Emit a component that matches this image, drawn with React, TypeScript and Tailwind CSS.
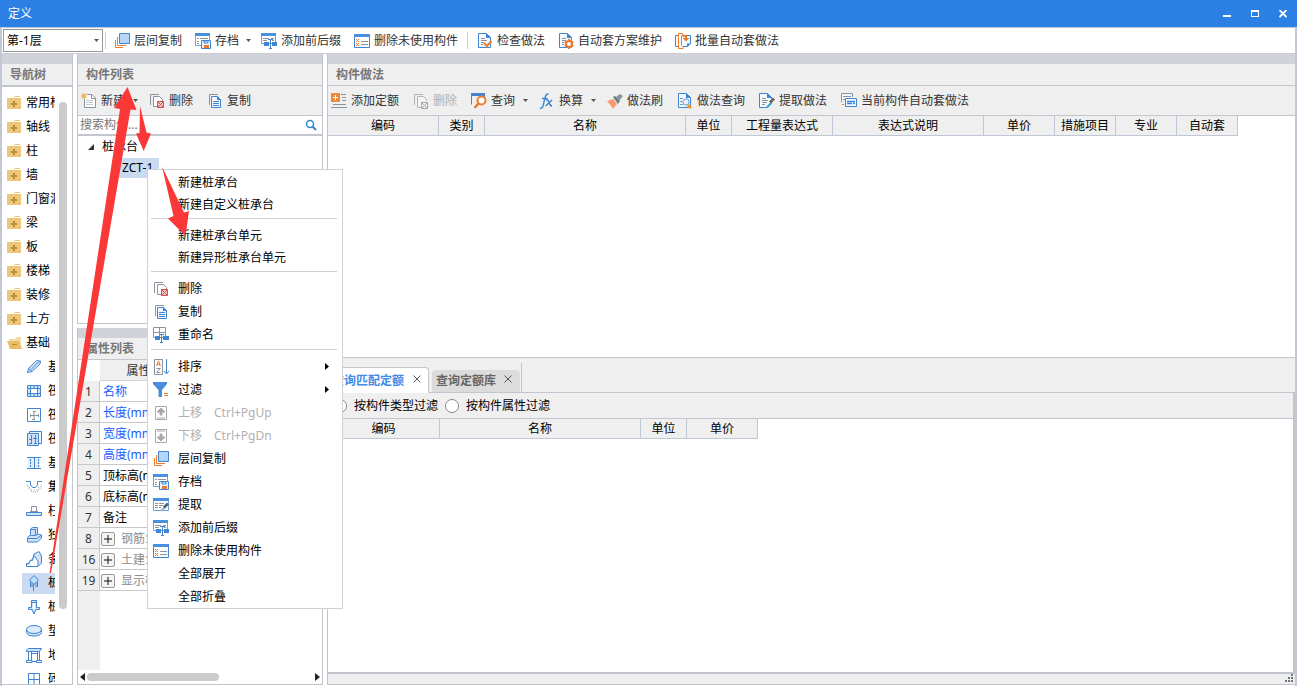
import type { ReactNode } from "react";

const BLUE = "#3f85d2";
const PALE = "#cfe2f8";
const ORANGE = "#ee7b2c";
const GRAY = "#8a949e";

const icons: Record<string, ReactNode> = {
  floorCopy: (
    <>
      <path d="M5.5.5h10v10h-10z" fill="#b5d5fb" stroke={BLUE} />
      <path d="M3.5 4v8.500H12M1.500 7v7.500H9" fill="none" stroke={ORANGE} />
    </>
  ),
  archive: (
    <>
      <path d="M.5.5h14v12H.5z" fill="#fff" stroke="#6fa3dd" />
      <path d="M0 0h15v3H0z" fill="#4a90e2" />
      <path d="M2 5.500h2M5 5.500h8M2 8.500h2M2 10.500h2" stroke={GRAY} />
      <path d="M6.500 7.500h9v8h-9z" fill="#e8f1fc" stroke={BLUE} />
      <path d="M9 8h4v2H9z" fill="#fff" stroke={BLUE} />
      <path d="M9 12h5v3H9z" fill={ORANGE} />
    </>
  ),
  prefix: (
    <>
      <path d="M.5.5h14v10H.5z" fill="#fff" stroke="#6fa3dd" />
      <path d="M0 0h15v3H0z" fill="#4a90e2" />
      <path d="M2 5.500h6M10 5.500h3M2 7.500h4M11 7.500h2" stroke={GRAY} />
      <path d="M3 9h5v4H3zM11 9h5v4h-5z" fill="#3f85d2" />
      <path d="M7 6.500h5M9.500 6.500v9M8 15.500h3" stroke={BLUE} />
    </>
  ),
  unused: (
    <>
      <path d="M.5 1.500h15v13H.5z" fill="#fff" stroke={BLUE} />
      <path d="M0 1h16v3H0z" fill="#4a90e2" />
      <path d="M2 6l3 3M5 6l-3 3M2 10l3 3M5 10l-3 3" stroke={ORANGE} />
      <path d="M7 8.500h7M7 11.500h7" stroke={GRAY} />
    </>
  ),
  check: (
    <>
      <path d="M1.500.5h8l4 4v10h-12z" fill="#f4f9ff" stroke={BLUE} />
      <path d="M9 0v5h5z" fill={BLUE} />
      <path d="M4 5.500h4M4 7.500h6M4 9.500h3M4 11.500h2" stroke={GRAY} />
      <path d="M7 10l3 3 4.500-5" fill="none" stroke={ORANGE} strokeWidth="2" />
    </>
  ),
  scheme: (
    <>
      <path d="M1.500.5h8l4 4v10h-12z" fill="#f4f9ff" stroke={BLUE} />
      <path d="M9 0v5h5z" fill={BLUE} />
      <path d="M4 5.500h4M4 7.500h4M4 9.500h2M4 11.500h2" stroke={GRAY} />
      <path d="M11 6v10M6.700 8.500l8.600 5M6.700 13.500l8.600-5" stroke={ORANGE} strokeWidth="2" />
      <circle cx="11" cy="11" r="3" fill="#fff" stroke={ORANGE} strokeWidth="2" />
    </>
  ),
  batch: (
    <>
      <path d="M3 2.500H.5v11H3" fill="none" stroke={BLUE} />
      <path d="M9 2.500h6.500v8l-3 3H8" fill="#f4f9ff" stroke={BLUE} />
      <path d="M12 14v-3.500h4z" fill={BLUE} />
      <path d="M8 2V.5H3.500v15H8V13M6.500 13V2.500H10" fill="none" stroke={ORANGE} />
      <path d="M8 2h4v3h2.500L11 8.500 7.500 5H10V4H8z" fill={ORANGE} />
    </>
  ),
  create: (
    <>
      <path d="M6 1.500h5l3.500 3.500v9.500h-11V6" fill="#fff" stroke={GRAY} />
      <path d="M10.500 1.500v4h4" fill="none" stroke={GRAY} />
      <path d="M5 7.500h7M5 9.500h7M5 11.500h7" stroke="#c3c9cf" />
      <path d="M.5.5l5 5M5.500.5l-5 5M3 0v6M0 3h6" stroke="#f0a648" />
    </>
  ),
  remove: (
    <>
      <path d="M1.500 12V1.500H10" fill="none" stroke={GRAY} />
      <path d="M8 13.500H4.500v-10h6l3 3V8" fill="#fff" stroke={GRAY} />
      <path d="M8.500 8.500h6v6h-6z" fill="#f6cfce" stroke="#d0504f" />
      <path d="M9 9l5 5M14 9l-5 5" stroke="#cf4a4a" />
    </>
  ),
  removeOff: (
    <>
      <path d="M1.500 12V1.500H10" fill="none" stroke="#b4b4b4" />
      <path d="M8 14.500H4.500v-11h6l3 3V8" fill="#f4f4f4" stroke="#b4b4b4" />
      <path d="M8.500 9.500h6v6h-6z" fill="#f4f4f4" stroke="#a8a8a8" />
      <path d="M9 10l5 5M14 10l-5 5" stroke="#a8a8a8" />
    </>
  ),
  copy: (
    <>
      <path d="M2.500 12V1.500H11" fill="none" stroke={GRAY} />
      <path d="M4.500 3.500h6l3 3v8h-9z" fill="#f4f9ff" stroke={BLUE} />
      <path d="M10 3v4h4z" fill={BLUE} />
      <path d="M6 8.500h6M6 10.500h6M6 12.500h6" stroke={BLUE} />
    </>
  ),
  addQuota: (
    <>
      <path d="M0 0h9v9H0z" fill="#ef8a3c" />
      <path d="M4.500 2v5M2 4.500h5" stroke="#fff" />
      <path d="M10 1.500h5M11 4.500h4M11 7.500h4M2 11.500h13M0 14.500h16" stroke={GRAY} />
    </>
  ),
  query: (
    <>
      <path d="M.5 11.500V1.500h13v3" fill="none" stroke={BLUE} />
      <path d="M0 0h14v3H0z" fill={BLUE} />
      <circle cx="10.500" cy="7.500" r="4" fill="#fff" stroke={ORANGE} strokeWidth="2" />
      <path d="M7.500 10.500L3.500 15" stroke={ORANGE} strokeWidth="2.500" />
    </>
  ),
  fx: (
    <>
      <path d="M1 15q2 1 3-2L6.500 3q.8-2.500 3-2M3 5.500h5.500" fill="none" stroke={BLUE} strokeWidth="1.400" />
      <path d="M7 7q2-1 3 2.500t3 3.500M13 7l-6.500 6" fill="none" stroke={BLUE} strokeWidth="1.400" />
    </>
  ),
  brush: (
    <>
      <path d="M0 8l6-2 4 5-4 5q-2-4-6-8z" fill="#fa9a6c" />
      <path d="M6 4l2-1 5 5-2 3z" fill="#6f7b86" />
      <path d="M9 4l4-3 3 2-4 5z" fill="#8a949e" />
    </>
  ),
  docSearch: (
    <>
      <path d="M1.500.5h8l4 4v10h-12z" fill="#f4f9ff" stroke={BLUE} />
      <path d="M9 0v5h5z" fill={BLUE} />
      <path d="M3 5.500h3M3 8.500h2M3 11.500h3" stroke={GRAY} />
      <circle cx="9" cy="9" r="3.200" fill="#eaf3fd" stroke="#5c98dc" />
      <path d="M11 12l3 3" stroke="#f09a2c" strokeWidth="3" />
    </>
  ),
  extractDoc: (
    <>
      <path d="M12.500 6V4.500l-4-4h-8v14H8" fill="#f4f9ff" stroke={BLUE} />
      <path d="M8 0v5h5z" fill={BLUE} />
      <path d="M3 5.500h4M3 7.500h6M3 9.500h5M3 11.500h3" stroke={GRAY} />
      <path d="M8 14.500l4.500-5" stroke="#38a8c8" strokeWidth="2" />
      <path d="M11 9.500l4-4" stroke="#6b6460" strokeWidth="3" />
    </>
  ),
  autoCurrent: (
    <>
      <path d="M.5 9V.5h11V4" fill="#f5f5f5" stroke={GRAY} />
      <path d="M2 3.500h8M2 6.500h2" stroke={GRAY} />
      <path d="M4.500 5.500h11v8h-11z" fill="#f4f9ff" stroke={BLUE} />
      <path d="M6 8.500h8M6 10.500h5M12 10.500h2" stroke={BLUE} strokeWidth="1.500" />
      <path d="M1 11.500h2" stroke={ORANGE} />
    </>
  ),
  rename: (
    <>
      <path d="M.5.500h12v10H.5zM6.500.5v10M.5 5.500h12" fill="#fff" stroke={GRAY} />
      <path d="M2 9h5v4H2zM10 9h6v4h-6z" fill="#3f85d2" />
      <path d="M6 7.500h5M8.500 7.500v8M7 15.500h3" stroke={BLUE} />
    </>
  ),
  sort: (
    <>
      <path d="M1.500.5h8v15h-8z" fill="#fff" stroke={GRAY} />
      <path d="M3.500 7l2-5 2 5M4 5.500h3" fill="none" stroke={ORANGE} />
      <path d="M3.500 9.500h4l-4 4h4" fill="none" stroke={GRAY} />
      <path d="M13.500 0v14M11 12l2.500 3 2.500-3" fill="none" stroke={BLUE} />
    </>
  ),
  filter: (
    <>
      <path d="M0 0h14v2L9 8v7H5.500V8L0 2z" fill="#4a8ddc" />
      <path d="M11 11.500h4M11 13.500h4" stroke={ORANGE} />
    </>
  ),
  up: (
    <>
      <path d="M2.500 1.500h11v13h-11z" fill="#fff" stroke="#a9a9a9" />
      <path d="M8 3L4 7h3v3h2V7h3zM4 13h8" fill="#a9a9a9" stroke="#a9a9a9" />
    </>
  ),
  down: (
    <>
      <path d="M2.500 1.500h11v13h-11z" fill="#fff" stroke="#a9a9a9" />
      <path d="M8 13L4 9h3V6h2v3h3zM4 3h8" fill="#a9a9a9" stroke="#a9a9a9" />
    </>
  ),
  extract: (
    <>
      <path d="M.5 1.500h15v12H.5z" fill="#fff" stroke="#6fa3dd" />
      <path d="M0 1h16v3H0z" fill="#4a90e2" />
      <path d="M2 6.500h3M6 6.500h5M2 8.500h3M6 8.500h4M2 10.500h3M6 10.500h2" stroke={GRAY} />
      <path d="M8 14l4-4" stroke="#9fb3c0" strokeWidth="2" />
      <path d="M11 10.500l4-4" stroke="#56636d" strokeWidth="3" />
    </>
  ),
  pencil: (
    <>
      <path d="M1.500 13.500l1-4 8-8 4 .5-.5 3-8 7.500z" fill={PALE} stroke={BLUE} />
      <path d="M2.500 9.500l3.500 3M5 10.500l8-8" fill="none" stroke={BLUE} />
    </>
  ),
  frame: (
    <>
      <path d="M1.500 2.500h13v11h-13z" fill={PALE} stroke={BLUE} />
      <path d="M4.500 5.500h7v5h-7zM4.500 2v12M11.500 2v12M8 2v3M8 11v3M1 5.500h3M12 5.500h3M1 10.500h3M12 10.500h3" fill="#fff" stroke={BLUE} />
    </>
  ),
  crossFrame: (
    <>
      <path d="M1.500 1.500h13v13h-13z" fill="#fff" stroke={BLUE} />
      <path d="M8 4v9M4 8.500h8M7 4.500h3M4.500 7v3M12.500 7v3M6 12.500h3" stroke={GRAY} />
    </>
  ),
  stackFrame: (
    <>
      <path d="M3.500 3V.5h12v12H13" fill="#eef5fd" stroke={BLUE} />
      <path d="M1.500 2.500h11v12h-11z" fill={PALE} stroke={BLUE} />
      <path d="M5.500 4v8M9.500 4v8M3 8.500h3M7 7.500h4M3 12.500h3M8 12.500h3" stroke={BLUE} />
    </>
  ),
  strip: (
    <>
      <path d="M2 3h12v10H2z" fill="#e3eefb" />
      <path d="M1 2.500h14M1 13.500h14M8.500 3v10" stroke={BLUE} />
      <path d="M4.500 4v9M12.500 4v9" stroke={BLUE} strokeDasharray="2 1" />
    </>
  ),
  pit: (
    <>
      <path d="M0 2.500h4.500V6l2 2.500h3l2-2.500V2.500H16" fill="none" stroke={BLUE} />
      <path d="M1 5.500l2 4 3 3.500h5l3-3.500 2-4" fill="none" stroke={GRAY} strokeDasharray="1 1" />
      <path d="M3 8l3 3h5l2-3" fill="none" stroke={GRAY} strokeDasharray="1 2" />
    </>
  ),
  cap: (
    <>
      <path d="M5.500 8V3.500h5V8M4 8.500h8" fill="#fff" stroke={GRAY} />
      <path d="M.5 9.500h15v3H.5z" fill={PALE} stroke={BLUE} />
    </>
  ),
  isolated: (
    <>
      <path d="M1.500 10.500l3-3V2l2-1.500h5V7l4 1v3l-4 4h-10z" fill={PALE} stroke={BLUE} />
      <path d="M1 11.500h10l4-3M4.500 8.500h5V2.500h-5M9.500 8.500l2-1" fill="none" stroke={BLUE} />
    </>
  ),
  multi: (
    <>
      <path d="M.5 15.500v-3h2l2-3.500h2L8 3l5-2.500L15.500 5v7L12 15.500z" fill={PALE} stroke={BLUE} />
      <path d="M.5 15.500V13h2l2-3.500h2L8 4.500l4 5.500v5.500z" fill="#fff" stroke={BLUE} />
    </>
  ),
  pileCap: (
    <>
      <path d="M8 .5L12.500 5 8 9.500 3.500 5z" fill="#bcdcfa" stroke={BLUE} />
      <path d="M4.500 7v5M7.500 9v7M11.500 7v5M6 8v4M10 8v4" stroke={BLUE} />
    </>
  ),
  pile: (
    <>
      <path d="M5.500 1.500h5v7h3v2H10L8 15l-2-4.500H2.500v-2h3z" fill={PALE} stroke={BLUE} />
      <path d="M7 3h2v7H7z" fill="#fff" />
      <path d="M5 3.500h6" stroke={BLUE} />
    </>
  ),
  cushion: (
    <>
      <path d="M.5 6.500v3q1 3.500 7.500 3.500t7.500-3.500v-3" fill={PALE} stroke={BLUE} />
      <ellipse cx="8" cy="6.500" rx="7.500" ry="4" fill="#dcebfb" stroke={BLUE} />
    </>
  ),
  beam: (
    <>
      <path d="M.5 4.500V3l2-1.500h13l-2 3z" fill={PALE} stroke={BLUE} />
      <path d="M2.500 5v8M5.500 5v8M11.500 5v8M13.500 5v8M5.500 6.500h6M.5 13.500h5.500v2H.5zM10.500 13.500h5v2h-5zM6 14.500h5" fill="none" stroke={BLUE} />
    </>
  ),
  brick: (
    <>
      <path d="M2.500 2.500h11v12h-11z" fill="#fff" stroke={BLUE} />
      <path d="M8 3v11M3 8.500h10" stroke={BLUE} />
    </>
  ),
};

function Icon({ name }: { name: string }) {
  return (
    <svg className="h-4 w-4 shrink-0" viewBox="0 0 16 16" aria-hidden="true">
      {icons[name]}
    </svg>
  );
}

function Caret() {
  return (
    <svg className="h-[3px] w-[5px]" viewBox="0 0 5 3" aria-hidden="true">
      <path d="M0 0h5L2.500 3z" fill="#555" />
    </svg>
  );
}

function Folder({ open = false }: { open?: boolean }) {
  return (
    <svg className="h-4 w-4 shrink-0" viewBox="0 0 16 16" aria-hidden="true">
      {open ? (
        <>
          <path d="M2 4h6l1-2h5v11H2z" fill="#f5dca6" />
          <path d="M0 6h12l3 8H3z" fill="#e8bd66" />
          <path d="M5 9.500h5" stroke="#b8892f" />
        </>
      ) : (
        <>
          <path d="M0 3h14v11H0z" fill="#eec77c" />
          <path d="M7 1.500h6" stroke="#eec77c" />
          <path d="M7 6v6M4 9h6" stroke="#b8892f" strokeWidth="2" />
          <path d="M6.500 9h1" stroke="#eec77c" />
        </>
      )}
    </svg>
  );
}

const mainTools = [
  { icon: "floorCopy", label: "层间复制" },
  { icon: "archive", label: "存档", menu: true },
  { icon: "prefix", label: "添加前后缀" },
  { icon: "unused", label: "删除未使用构件", divider: true },
  { icon: "check", label: "检查做法" },
  { icon: "scheme", label: "自动套方案维护" },
  { icon: "batch", label: "批量自动套做法" },
];

interface Tool {
  icon: string;
  label: string;
  menu?: boolean;
  disabled?: boolean;
}

const componentTools: Tool[] = [
  { icon: "create", label: "新建", menu: true },
  { icon: "remove", label: "删除" },
  { icon: "copy", label: "复制" },
];

const methodTools: Tool[] = [
  { icon: "addQuota", label: "添加定额" },
  { icon: "removeOff", label: "删除", disabled: true },
  { icon: "query", label: "查询", menu: true },
  { icon: "fx", label: "换算", menu: true },
  { icon: "brush", label: "做法刷" },
  { icon: "docSearch", label: "做法查询" },
  { icon: "extractDoc", label: "提取做法" },
  { icon: "autoCurrent", label: "当前构件自动套做法" },
];

const navGroups = ["常用构件类型", "轴线", "柱", "墙", "门窗洞", "梁", "板", "楼梯", "装修", "土方"];

const foundationItems = [
  { icon: "pencil", label: "基础梁" },
  { icon: "frame", label: "筏板基础" },
  { icon: "crossFrame", label: "筏板主筋" },
  { icon: "stackFrame", label: "筏板负筋" },
  { icon: "strip", label: "基础板带" },
  { icon: "pit", label: "集水坑" },
  { icon: "cap", label: "柱墩" },
  { icon: "isolated", label: "独立基础" },
  { icon: "multi", label: "条形基础" },
  { icon: "pileCap", label: "桩承台", selected: true },
  { icon: "pile", label: "桩" },
  { icon: "cushion", label: "垫层" },
  { icon: "beam", label: "地沟" },
  { icon: "brick", label: "砖胎膜" },
];

const properties = [
  { no: 1, label: "名称", tone: "text-[#1a5cff]" },
  { no: 2, label: "长度(mm)", tone: "text-[#1a5cff]" },
  { no: 3, label: "宽度(mm)", tone: "text-[#1a5cff]" },
  { no: 4, label: "高度(mm)", tone: "text-[#1a5cff]" },
  { no: 5, label: "顶标高(m)", tone: "text-black" },
  { no: 6, label: "底标高(m)", tone: "text-black" },
  { no: 7, label: "备注", tone: "text-black" },
  { no: 8, label: "钢筋业务属性", tone: "text-[#8c8c8c]", group: true },
  { no: 16, label: "土建业务属性", tone: "text-[#8c8c8c]", group: true },
  { no: 19, label: "显示样式", tone: "text-[#8c8c8c]", group: true },
];

const methodColumns = [
  { label: "编码", width: 111 },
  { label: "类别", width: 46 },
  { label: "名称", width: 201 },
  { label: "单位", width: 46 },
  { label: "工程量表达式", width: 101 },
  { label: "表达式说明", width: 151 },
  { label: "单价", width: 71 },
  { label: "措施项目", width: 61 },
  { label: "专业", width: 61 },
  { label: "自动套", width: 61 },
];

const quotaColumns = [
  { label: "编码", width: 112 },
  { label: "名称", width: 201 },
  { label: "单位", width: 46 },
  { label: "单价", width: 71 },
];

const menuSections: { label: string; icon?: string; shortcut?: string; submenu?: boolean; disabled?: boolean }[][] = [
  [{ label: "新建桩承台" }, { label: "新建自定义桩承台" }],
  [{ label: "新建桩承台单元" }, { label: "新建异形桩承台单元" }],
  [
    { label: "删除", icon: "remove" },
    { label: "复制", icon: "copy" },
    { label: "重命名", icon: "rename" },
  ],
  [
    { label: "排序", icon: "sort", submenu: true },
    { label: "过滤", icon: "filter", submenu: true },
    { label: "上移", icon: "up", shortcut: "Ctrl+PgUp", disabled: true },
    { label: "下移", icon: "down", shortcut: "Ctrl+PgDn", disabled: true },
    { label: "层间复制", icon: "floorCopy" },
    { label: "存档", icon: "archive" },
    { label: "提取", icon: "extract" },
    { label: "添加前后缀", icon: "prefix" },
    { label: "删除未使用构件", icon: "unused" },
    { label: "全部展开" },
    { label: "全部折叠" },
  ],
];

function PanelTitle({ children }: { children: ReactNode }) {
  return (
    <header className="shrink-0 border-t-10 border-[#d2d3da] bg-[#efefef]">
      <h2 className="h-[22px] border-b border-[#c3c6cc] px-2 leading-[21px] font-bold text-[#777]">{children}</h2>
    </header>
  );
}

function PanelToolbar({ tools }: { tools: Tool[] }) {
  return (
    <div className="flex h-[30px] shrink-0 items-center gap-2 overflow-hidden border-b border-[#c3c6cc] bg-[#efefef]">
      {tools.map((tool) => (
        <button
          key={tool.label}
          type="button"
          disabled={tool.disabled}
          className={`flex h-6 shrink-0 items-center gap-1 pl-[3px] ${tool.menu ? "" : "pr-[3px]"} ${tool.disabled ? "text-[#b0b0b0]" : "text-[#333]"}`}
        >
          <Icon name={tool.icon} />
          {tool.label}
          {tool.menu ? (
            <span className="flex w-[9px] justify-end">
              <Caret />
            </span>
          ) : null}
        </button>
      ))}
    </div>
  );
}

function HeaderTable({ columns }: { columns: { label: string; width: number }[] }) {
  return (
    <table className="table-fixed border-separate border-spacing-0 self-start">
      <thead>
        <tr>
          {columns.map((column) => (
            <th
              key={column.label}
              scope="col"
              style={{ width: column.width }}
              className="h-5 border-r border-b border-[#c0c8d8] bg-[#efefef] p-0 font-normal"
            >
              {column.label}
            </th>
          ))}
        </tr>
      </thead>
    </table>
  );
}

function NavPanel() {
  return (
    <nav className="flex w-[71px] shrink-0 flex-col border-r border-b border-[#c0c4cc] bg-white">
      <PanelTitle>导航树</PanelTitle>
      <div className="flex min-h-0 flex-1 border-t border-[#c3c6cc] pt-1">
        <ul className="w-[53px] overflow-hidden">
          {navGroups.map((label) => (
            <li key={label} className="flex h-6 items-center gap-[3px] pl-[5px] whitespace-nowrap">
              <Folder />
              <span>{label}</span>
            </li>
          ))}
          <li className="flex h-6 items-center gap-[3px] pl-[5px] whitespace-nowrap">
            <Folder open />
            <span>基础</span>
          </li>
          {foundationItems.map((item) => (
            <li key={item.icon} className="flex h-6 items-center pl-5">
              <span
                className={`flex h-[21px] w-full items-center gap-[6px] pl-1 whitespace-nowrap ${item.selected ? "bg-[#c9daf1]" : ""}`}
              >
                <Icon name={item.icon} />
                {item.label}
              </span>
            </li>
          ))}
        </ul>
        <div className="mt-[11px] ml-1 h-[507px] w-2 rounded-full bg-[#cbcbcb]" />
      </div>
    </nav>
  );
}

function ComponentPanel() {
  return (
    <div className="flex w-[246px] shrink-0 flex-col">
      <section className="flex h-[270px] shrink-0 flex-col border-x border-b border-[#c0c4cc] bg-white">
        <PanelTitle>构件列表</PanelTitle>
        <PanelToolbar tools={componentTools} />
        <div className="flex h-5 shrink-0 items-center border-b-2 border-[#c3c6cc] pr-[5px]">
          <input
            type="text"
            aria-label="搜索构件"
            placeholder="搜索构件..."
            className="min-w-0 flex-1 px-[2px] outline-none placeholder:text-[#777]"
          />
          <svg className="h-3 w-3" viewBox="0 0 12 12" aria-hidden="true">
            <circle cx="5" cy="5" r="3.500" fill="none" stroke="#2e8bc9" strokeWidth="1.500" />
            <path d="M7.500 7.500L11 11" stroke="#2e8bc9" strokeWidth="2" />
          </svg>
        </div>
        <ul>
          <li>
            <div className="flex h-[22px] items-center gap-[7px] pl-[10px]">
              <svg className="h-[6px] w-[7px]" viewBox="0 0 7 6" aria-hidden="true">
                <path d="M6 0v6H0z" fill="#333" />
              </svg>
              桩承台
            </div>
            <ul>
              <li className="ml-[41px] h-5 w-10 bg-[#c9daf1] pl-[3px] leading-5">ZCT-1</li>
            </ul>
          </li>
        </ul>
      </section>

      <section className="mt-1 flex min-h-0 flex-1 flex-col border-x border-b border-[#c0c4cc] bg-white">
        <PanelTitle>属性列表</PanelTitle>
        <div className="flex min-h-0 flex-1 flex-col overflow-hidden bg-[linear-gradient(to_right,#efefef_22px,#fff_22px)]">
          <table className="w-full table-fixed border-separate border-spacing-0">
            <colgroup>
              <col className="w-[22px]" />
              <col className="w-[101px]" />
              <col />
            </colgroup>
            <thead>
              <tr>
                <td className="h-[21px] bg-white p-0" />
                <th scope="col" className="border-b border-[#d4d4d4] bg-[#efefef] p-0 pt-px font-normal text-[#333]">属性名称</th>
                <th scope="col" className="border-b border-[#d4d4d4] bg-[#efefef] p-0 pt-px font-normal text-[#333]">属性值</th>
              </tr>
            </thead>
            <tbody>
              {properties.map((row) => (
                <tr key={row.no}>
                  <th scope="row" className="h-[21px] border-r border-b border-[#c8c8c8] bg-[#efefef] p-0 pt-px font-normal text-[#333]">
                    {row.no}
                  </th>
                  <td className={`border-r border-b border-[#c8c8c8] p-0 pt-px ${row.tone}`}>
                    <div className={`flex items-center ${row.group ? "gap-[6px] pl-px" : "pl-[3px]"}`}>
                      {row.group ? (
                        <button
                          type="button"
                          aria-label={`展开${row.label}`}
                          className="flex h-[14px] w-[14px] items-center justify-center rounded-xs border border-[#999] bg-[#f4f4f4]"
                        >
                          <svg className="h-2 w-2" viewBox="0 0 8 8" aria-hidden="true">
                            <path d="M4 0v8M0 4h8" stroke="#111" />
                          </svg>
                        </button>
                      ) : null}
                      {row.label}
                    </div>
                  </td>
                  <td className="border-b border-[#c8c8c8] p-0" />
                </tr>
              ))}
            </tbody>
          </table>
        </div>
        <div className="flex h-[14px] shrink-0 items-center gap-[2px] px-[2px]">
          <svg className="h-2 w-[5px]" viewBox="0 0 5 8" aria-hidden="true">
            <path d="M5 0v8L0 4z" fill="#222" />
          </svg>
          <div className="flex-1">
            <div className="h-2 w-[132px] rounded-full bg-[#cbcbcb]" />
          </div>
          <svg className="h-2 w-[5px]" viewBox="0 0 5 8" aria-hidden="true">
            <path d="M0 0v8l5-4z" fill="#222" />
          </svg>
        </div>
      </section>
    </div>
  );
}

function MethodPanel() {
  return (
    <main className="flex min-w-0 flex-1 flex-col border-b border-l border-[#c0c4cc] bg-white">
      <PanelTitle>构件做法</PanelTitle>
      <PanelToolbar tools={methodTools} />
      <div className="flex h-[242px] shrink-0 flex-col overflow-hidden border-b border-[#c3c6cc]">
        <HeaderTable columns={methodColumns} />
      </div>
      <div role="tablist" className="flex h-[35px] shrink-0 items-end border-b border-[#c3c6cc] bg-[#efefef]">
        <div className="-mb-px flex h-[26px] w-[101px] items-center justify-between rounded-tr-sm border-t border-r border-[#c3c6cc] bg-white pr-[7px] pl-1">
          <button type="button" role="tab" aria-selected="true" className="font-bold text-[#3f8ce8]">查询匹配定额</button>
          <CloseTab />
        </div>
        <div className="ml-[3px] flex h-[22px] w-[88px] items-center justify-between rounded-t-sm bg-[#dcdcdc] pr-2 pl-1">
          <button type="button" role="tab" aria-selected="false" className="font-bold text-[#666]">查询定额库</button>
          <CloseTab />
        </div>
        <div className="ml-px h-[29px] w-px bg-[#c3c6cc]" />
      </div>
      <div className="flex min-h-0 flex-1 flex-col border-r-2 border-b-2 border-[#c0c4cc]">
        <div className="flex h-[26px] shrink-0 items-center gap-[7px] border-b border-[#c3c6cc] bg-[#efefef] pl-[5px]">
          <label className="flex items-center gap-[7px]">
            <input type="radio" name="match" className="h-[14px] w-[14px] appearance-none rounded-full border border-[#888] bg-white" />
            按构件类型过滤
          </label>
          <label className="flex items-center gap-[7px]">
            <input type="radio" name="match" className="h-[14px] w-[14px] appearance-none rounded-full border border-[#888] bg-white" />
            按构件属性过滤
          </label>
        </div>
        <HeaderTable columns={quotaColumns} />
      </div>
      <footer className="flex h-[10px] shrink-0 items-end justify-end bg-[#efefef] pr-[2px] pb-[2px]">
        <svg className="h-2 w-2" viewBox="0 0 8 8" aria-hidden="true">
          <path d="M6 0h2v2H6zM3 3h2v2H3zM6 3h2v2H6zM0 6h2v2H0zM3 6h2v2H3zM6 6h2v2H6z" fill="#70757e" />
        </svg>
      </footer>
    </main>
  );
}

function CloseTab() {
  return (
    <button type="button" aria-label="关闭标签" className="pb-1">
      <svg className="h-2 w-2" viewBox="0 0 8 8" aria-hidden="true">
        <path d="M.5.5l7 7M7.500.5l-7 7" stroke="#555" />
      </svg>
    </button>
  );
}

function ContextMenu() {
  return (
    <div
      role="menu"
      className="absolute top-[169px] left-[147px] z-10 w-[196px] divide-y divide-[#d0d0d4] border border-[#d0d2d6] bg-white pr-[5px] pl-[3px]"
    >
      {menuSections.map((section, index) => (
        <div
          key={index}
          className={`${index === 0 ? "pt-[2px]" : index === 1 ? "pt-[6px]" : "pt-[5px]"} ${index === 3 ? "" : index === 2 ? "pb-[3px]" : "pb-[2px]"}`}
        >
          {section.map((item) => (
            <button
              key={item.label}
              type="button"
              role="menuitem"
              disabled={item.disabled}
              className={`flex w-full items-center pr-2 pl-[2px] text-left ${index > 1 ? "h-[23px]" : "h-[22px]"} ${item.disabled ? "text-[#b0b0b0]" : "text-black"}`}
            >
              <span className="mr-[9px] w-4">{item.icon ? <Icon name={item.icon} /> : null}</span>
              <span>{item.label}</span>
              {item.shortcut ? <span className="ml-3">{item.shortcut}</span> : null}
              {item.submenu ? (
                <svg className="ml-auto h-[7px] w-1" viewBox="0 0 4 7" aria-hidden="true">
                  <path d="M0 0v7l4-3.500z" fill="#000" />
                </svg>
              ) : null}
            </button>
          ))}
        </div>
      ))}
    </div>
  );
}

function GuideArrows() {
  return (
    <svg className="pointer-events-none absolute inset-0 z-20 h-full w-full" aria-hidden="true">
      <g fill="#fb3838">
        <path d="M49.500 573L120 109l-6-1 13.500-21 9 23-6-.5L51 573z" />
        <path d="M140 106l6.500 26.500 4.500 1-7.300 17.500-7.700-17.500 3.500-.5z" />
        <path d="M162 166.500l22 46 5-1.500-3.500 25L168 218.500l5.500-2.500z" />
      </g>
    </svg>
  );
}

export default function App() {
  return (
    <div className="relative flex h-screen flex-col overflow-hidden bg-white font-['Noto_Sans','Noto_Sans_CJK_SC',sans-serif] text-[12px] leading-4 text-black">
      <header className="flex h-[27px] shrink-0 items-center justify-between bg-[#2d80e3] px-2 text-white">
        <h1>定义</h1>
        <div className="flex gap-5 pr-[2px]">
          <button type="button" aria-label="最小化">
            <svg className="h-2 w-2" viewBox="0 0 8 8">
              <path d="M0 5h8v2H0z" fill="#fff" />
            </svg>
          </button>
          <button type="button" aria-label="最大化">
            <svg className="h-2 w-2" viewBox="0 0 8 8">
              <path d="M0 0h8v7H0zM1 2v4h6V2z" fill="#fff" fillRule="evenodd" />
            </svg>
          </button>
          <button type="button" aria-label="关闭">
            <svg className="h-2 w-2" viewBox="0 0 8 8">
              <path d="M.5 0l7 7M7.500 0l-7 7" stroke="#fff" strokeWidth="1.800" />
            </svg>
          </button>
        </div>
      </header>

      <div className="flex min-h-0 flex-1 flex-col border-x-2 border-t border-[#c1c8d6] pb-px">
        <div className="flex h-[26px] shrink-0 items-center border-b border-[#c9ccd2] bg-white text-[#333]">
          <div className="relative ml-px">
            <select aria-label="楼层" className="h-[23px] w-[100px] appearance-none border border-[#999] bg-white px-[3px] text-black">
              <option>第-1层</option>
            </select>
            <span className="pointer-events-none absolute top-0 right-1 flex h-full items-center">
              <Caret />
            </span>
          </div>
          <div className="mx-[2px] h-[17px] w-px bg-[#cfcfcf]" />
          <div className="ml-px flex items-center gap-[3px]">
            {mainTools.map((tool) => (
              <div key={tool.label} className="flex shrink-0 items-center gap-1">
                <button type="button" className={`flex h-6 items-center gap-1 pl-[5px] ${tool.menu ? "" : "pr-[5px]"}`}>
                  <Icon name={tool.icon} />
                  {tool.label}
                  {tool.menu ? (
                    <span className="flex w-[10px] justify-center">
                      <Caret />
                    </span>
                  ) : null}
                </button>
                {tool.divider ? <span className="mr-px h-[17px] w-px bg-[#cfcfcf]" /> : null}
              </div>
            ))}
          </div>
        </div>

        <div className="flex min-h-0 flex-1 gap-1">
          <NavPanel />
          <ComponentPanel />
          <MethodPanel />
        </div>
      </div>

      <ContextMenu />
      <GuideArrows />
    </div>
  );
}
